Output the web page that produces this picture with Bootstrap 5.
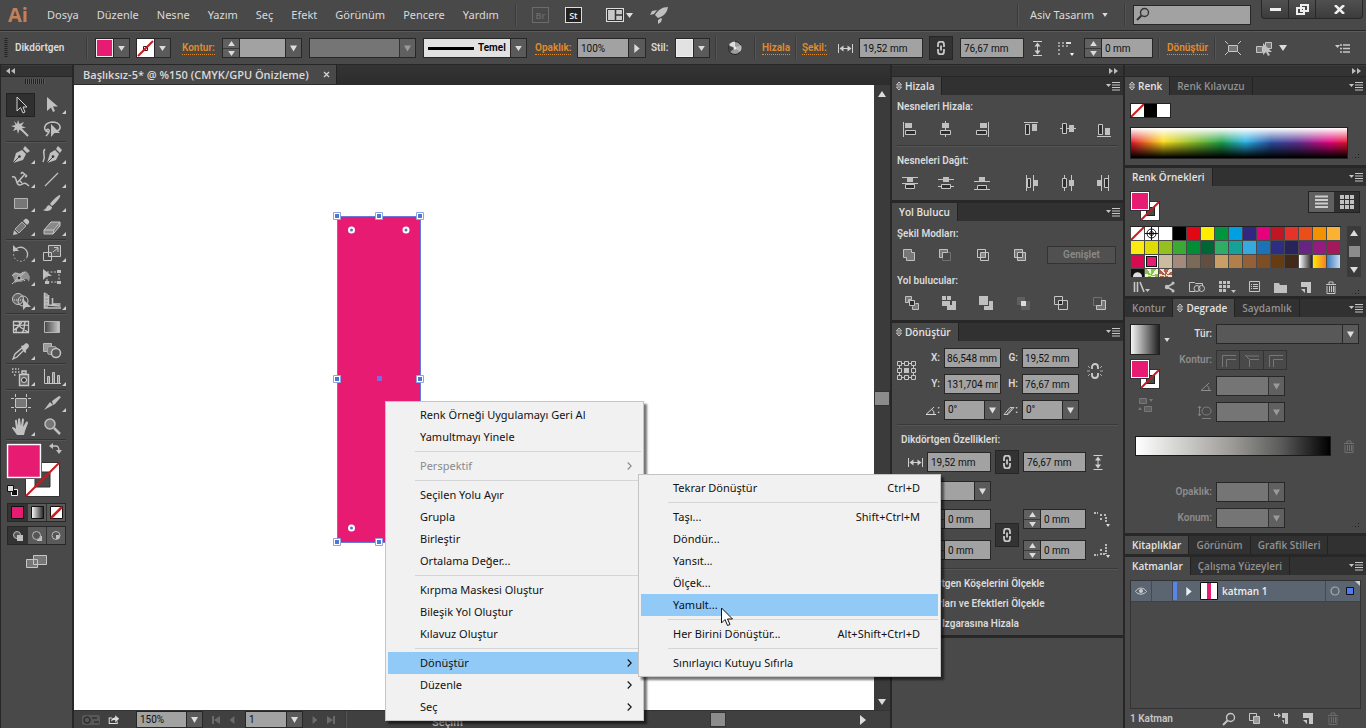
<!DOCTYPE html>
<html lang="tr">
<head>
<meta charset="utf-8">
<meta name="viewport" content="width=device-width, initial-scale=1">
<title>Başlıksız-5* @ %150</title>
<link href="https://cdn.jsdelivr.net/npm/bootstrap@5.3.0/dist/css/bootstrap.min.css" rel="stylesheet">
<style>
:root{--bg:#494949;--line:#272727;--ink:#dadada;--field:#a2a2a2;--pink:#e81b73;--orange:#e08c2e}
body{background:var(--bg);color:var(--ink);font:600 10px/14px Roboto,"Open Sans",sans-serif;min-height:100vh;display:flex;flex-direction:column;position:relative;overflow-x:hidden}
button{background:none;border:0;padding:0;color:inherit;font:inherit;display:flex;align-items:center;justify-content:center}
a{color:inherit;text-decoration:none}
svg{display:block;flex:none}
input,select{font:400 10px/14px Roboto,"DejaVu Sans",sans-serif;color:#111;background:var(--field);border:1px solid var(--line);border-radius:0;height:20px;padding:0 3px;min-width:0;width:100%}
select{appearance:none;background:var(--field) url("data:image/svg+xml,%3Csvg xmlns='http://www.w3.org/2000/svg' width='16' height='18'%3E%3Crect width='16' height='18' fill='%235a5a5a'/%3E%3Crect width='1' height='18' fill='%23272727'/%3E%3Cpath d='M5 6.500h7l-3.500 6z' fill='%23dedede'/%3E%3C/svg%3E") right center no-repeat}
select:disabled{opacity:1;color:#333;background-color:#757575;background-image:url("data:image/svg+xml,%3Csvg xmlns='http://www.w3.org/2000/svg' width='16' height='18'%3E%3Crect width='16' height='18' fill='%23606060'/%3E%3Crect width='1' height='18' fill='%23333333'/%3E%3Cpath d='M5 6.500h7l-3.500 6z' fill='%239a9a9a'/%3E%3C/svg%3E")}
.f{fill:#c0c0c0}
.ln{fill:none;stroke:#c6c6c6}
.hol{fill:#2e2e2e;stroke:#c6c6c6}
/* title bar */
.menubar{height:31px;border-bottom:1px solid var(--line);font:400 11px/16px "Noto Sans","Open Sans",sans-serif;padding-left:8px}
.logo{font:700 20px/26px "Open Sans",sans-serif;color:#bf8259;width:39px}
.menus{gap:18px}
.vsep{width:1px;height:22px;background:#3a3a3a;box-shadow:1px 0 #555}
.sq{width:17px;height:16px;border:1px solid #6b6b6b;color:#6b6b6b;font:600 9px/13px "Open Sans",sans-serif}
.sq.on{border-color:#ddd;color:#eee;background:#222}
.find{position:relative;width:118px}
.find svg{position:absolute;left:3px;top:2px;color:#333}
.winbtns{align-self:start;border:1px solid var(--line);border-top:0;border-radius:0 0 4px 4px;background:linear-gradient(#505050,#3c3c3c);margin-left:10px;margin-right:3px}
.winbtns button{height:18px;width:27px;border-right:1px solid var(--line)}
.winbtns button:last-child{width:46px;border:0}
/* control bar */
.control{height:34px;border-bottom:1px solid var(--line);border-top:1px solid #5a5a5a;display:grid;align-items:center;
grid-template-columns:15px 71px 9px 41px 46px 40px 87px 114px 112px 42px 74px 24px 40px 13px 26px 8px 33px 7px 36px 21px 70px 31px 73px 24px 27px 74px 9px 47px 11px 31px 23px 1fr 31px}
.olink{color:var(--orange);border-bottom:1px dotted var(--orange);line-height:13px;justify-self:start}
.spin{display:flex}
.spin>span{display:flex;flex-direction:column;width:17px;flex:none;background:#606060;border:1px solid var(--line);border-right:0}
.spin button{height:9px}
.spin button+button{border-top:1px solid #3a3a3a}
.chip{display:flex;border:1px solid var(--line);height:20px;width:35px}
.chip .sw{width:18px;height:18px;border:1px solid #eee}
.swlight{background:#e2e2e2}
.chip .dd{width:16px;height:18px;background:#5a5a5a;border-left:1px solid var(--line);display:flex;align-items:center;justify-content:center}
.bgpink{background:var(--pink)}
.flyout{width:17px;height:20px;background:#5a5a5a;border:1px solid var(--line);border-left:0;flex:none}
.chain{width:24px;height:24px;background:#333;border:1px solid #262626}
.w58{width:58px}.w64{width:64px}.w67{width:67px}.w69{width:69px}.w80{width:80px}.w107{width:107px}.w104{width:104px}
/* tool column */
.tools{width:74px;flex:none;border-right:2px solid var(--line);border-left:1px solid var(--line)}
.strip{height:12px;background:#333;border-bottom:1px solid var(--line);border-top:1px solid #3c3c3c;padding:0 5px;display:flex;align-items:center;flex:none;color:#bbb}
.grip{height:5px;width:20px;background:repeating-linear-gradient(90deg,#222 0 1px,#5a5a5a 1px 2px);margin:2px 0 9px 24px}
.toolgrid{display:grid;grid-template-columns:31px 31px;grid-auto-rows:minmax(1px,auto);padding-left:5px}
.toolgrid button{position:relative;height:24px;width:29px}
.toolgrid .sub::after{content:"";position:absolute;right:0;bottom:3px;border:2px solid;border-color:transparent #ccc #ccc transparent}
.toolgrid .sel{background:#303030;border:1px solid #222}
.tline{grid-column:1/3;height:1px;background:#343434;border:0;box-shadow:0 1px #555;width:60px;margin:0 0 1px;opacity:1}
.fillbox{align-self:start;margin:2px 0 0 5px}
.modes{width:59px;height:19px;border:1px solid #272727;background:#5a5a5a;display:grid;grid-template-columns:1fr 1fr 1fr;margin-left:6px}
.modes button+button{border-left:1px solid #333}
.modes .act{background:#333}
/* document */
.doc{min-width:0}
.doctabs{height:20px;background:linear-gradient(#343434,#2c2c2c)}
.doctab{background:var(--bg);height:19px;padding:0 6px 0 9px;width:263px;border-right:1px solid #222;font:600 11px/14px "Open Sans",sans-serif}
.sheet{background:#fff;position:relative}
.art{position:absolute;left:258px;top:126px}
.vscroll{width:16px;background:#3b3b3b;padding:6px 0 5px}
.thumb{width:16px;height:15px;background:#8c8c8c;border:1px solid #333}
.status{height:18px;background:#404040;border-top:1px solid #333;overflow:hidden;flex:none;color:#6b6b6b}
.status select{height:17px}
.nav1{gap:9px;padding:0 10px 0 9px}
.seltext{margin-left:86px;color:#bbb;align-self:end;font-size:11px;line-height:11px}
.hth{margin-right:134px}
/* panels */
.pcol1{width:235px;flex:none;border-left:2px solid var(--line);border-right:2px solid var(--line)}
.pcol2{width:241px;flex:none}
.tabs{height:18px;background:#313131;display:flex;flex:none}
.tabs button{padding:0 7px;height:18px;color:#929292;border-right:1px solid #222;gap:3px;font:600 10px/14px "Open Sans",sans-serif;white-space:nowrap}
.tabs button.act{background:var(--bg);color:#e4e4e4}
.tabs .lead-ud{padding-left:4px}
.tabs button.more{margin-left:auto;border:0;padding:0 3px}
.pane{border-bottom:3px solid var(--line);padding:0 5px}
.rule{height:1px;background:#393939;box-shadow:0 1px #555}
.align{padding-top:5px;padding-bottom:1px}
.ico6{display:grid;grid-template-columns:36px 36px 50px 36px 36px 16px;padding-left:5px;margin:7px 0 8px}
.pf{padding-top:6px;padding-bottom:9px}
.pf1{display:grid;grid-template-columns:36px 38px 37px 34px 69px;align-items:center;padding-left:5px;margin:5px 0 10px}
.pf2{display:grid;grid-template-columns:37px 37px 37px 38px 38px 16px;padding-left:8px;margin-top:8px}
.expand{border:1px solid #333;color:#8a8a8a;height:18px;background:#505050}
.tr{padding-top:7px;padding-bottom:1px}
.xy{display:grid;grid-template-columns:28px 19px 57px 21px 57px 1fr;row-gap:6px;align-items:center}
.xy input{padding:0 2px}
.refp,.brk{grid-row:span 2}
.props{margin:8px 0 3px 4px}
.rp{display:grid;grid-template-columns:30px 64px 4px 24px 4px 63px 1fr;align-items:center}
.rgap{margin-top:7px}
.rows2{row-gap:11px;margin-top:8px}
.both{grid-row:span 2}
.lab{text-align:right;padding-right:4px}
.dim{color:#8d8d8d}
.ticks{padding-top:5px}
.tick{display:flex;align-items:center;gap:4px;height:20px;white-space:nowrap}
.tick input{width:11px;height:11px;flex:none;appearance:none;background:#333;padding:0}
.colorpane{padding-top:8px;padding-bottom:6px}
.spectrum{height:32px;width:218px;border:1px solid #222;background:linear-gradient(#fff,#fff0 50%),linear-gradient(#0000 45%,#000 98%),linear-gradient(90deg,#e5132b,#fbdc1a 15%,#6fb52c 32%,#1ba04b 42%,#27b1e6 53%,#2a4fa2 65%,#5d3192 77%,#e5007e 92%,#e5132b)}
.specrow{margin-top:9px}
.swpane{padding-top:5px}
.swwrap{gap:6px;margin-top:4px}
.swgrid{display:grid;grid-template-columns:repeat(15,14px);grid-auto-rows:14px;border-top:1px solid #222;height:51px;overflow:hidden;flex:none;width:211px;padding-left:1px}
.swgrid button,.swgrid svg{width:13px;height:13px}
.picked{box-shadow:inset 0 0 0 1px #fff,inset 0 0 0 2px #111}
.sbar{width:14px;height:51px;background:#3a3a3a;padding:4px 0}
.view{width:52px;height:22px;border:1px solid #222;background:#303030;margin-right:1px}
.view button{flex:1}
.view button:first-child{background:#606060}
.corner-grip{width:10px;height:9px;background:radial-gradient(#1c1c1c 1px,transparent 1px) 0 0/3px 3px;clip-path:polygon(100% 0,100% 100%,0 100%)}
.foot{color:#c6c6c6}
.swfoot{gap:13px;padding:2px 0 1px 3px;height:19px}
.gpane{padding-top:7px;padding-bottom:5px}
.gleft{width:43px}
.gform{display:grid;grid-template-columns:43px 1fr;row-gap:6px;align-items:center;flex:1}
.second{padding-left:43px}
.wide{width:143px;background-color:#585858}
.rampr{margin:14px 0 26px 5px}
.ramp{width:196px;height:20px;border:1px solid #1a1a1a;background:linear-gradient(90deg,#fff,#9b9a96 50%,#5a5a5a 75%,#000)}
.gprev{width:30px;height:31px;border:1px solid #222;background:linear-gradient(90deg,#f4f4f4,#222)}
.strk{border:1px solid #333;height:20px;width:71px}
.strk button{flex:1}
.strk button+button{border-left:1px solid #333}
.gapline{height:3px;background:var(--line)}
.lpane{padding:5px 5px 0}
.layers{border:1px solid #333}
.lrow{background:#5b6471;height:21px;border-bottom:1px solid #3c424c;font:600 10px/14px "Open Sans",sans-serif;color:#eee}
.lrow>*{height:20px;display:flex;align-items:center;justify-content:center}
.lcell{width:21px;border-right:1px solid #434a55}
.target{border-left:1px solid #434a55}
.lfoot{height:19px;gap:13px}
.lfoot svg:last-child{margin-right:22px}
/* context menus */
.cmenu{position:absolute;background:#f1f1f1;border:1px solid #c4c4c4;border-radius:0;padding:2px;margin:0;box-shadow:3px 3px 2px #0008;z-index:5;min-width:0;display:block}
.cmenu .dropdown-item{padding:0 18px 0 32px;height:22px;display:flex;align-items:center;justify-content:space-between;color:#111;font:400 11px/22px "Noto Sans","Open Sans",sans-serif;white-space:nowrap}
.cmenu .hot{background:#91c9f7}
.cmenu .off{color:#8a8a8a}
.cmenu .dropdown-divider{margin:3px 0 3px 27px;border-top:1px solid #d5d5d5;opacity:1}
.m1{left:385px;top:401px;width:259px}
.m1 .dropdown-item{padding-right:9px}
.m2{left:638px;top:474px;width:303px}
.ptr{position:absolute;left:720px;top:607px;z-index:9}
</style>
</head>
<body>
<svg width="0" height="0" class="position-absolute">
<defs>
<symbol id="dn" viewBox="0 0 8 6"><path d="M0 0h8l-4 6z" fill="#dcdcdc"/></symbol>
<symbol id="up" viewBox="0 0 8 6"><path d="M0 6h8l-4-6z" fill="#dcdcdc"/></symbol>
<symbol id="lt" viewBox="0 0 6 10"><path d="M6 0v10l-6-5z" fill="currentColor"/></symbol>
<symbol id="rt" viewBox="0 0 6 10"><path d="M0 0v10l6-5z" fill="currentColor"/></symbol>
<symbol id="chev" viewBox="0 0 5 8"><path d="M.7.5L4.200 4 .7 7.500" fill="none" stroke="currentColor" stroke-width="1.100"/></symbol>
<symbol id="more" viewBox="0 0 14 9"><path d="M0 2h5l-2.500 3z" fill="#c6c6c6"/><path d="M6 .5h8M6 3h8M6 5.500h8M6 8h8" stroke="#c6c6c6"/></symbol>
<symbol id="ud" viewBox="0 0 6 10"><path d="M.5 4L3 1l2.500 3zM.5 6L3 9l2.500-3z" fill="none" stroke="#cfcfcf"/></symbol>
<symbol id="chain" viewBox="0 0 10 14"><path d="M2 6V3.500a2.500 2.500 0 0 1 6 0V6M2 8v2.500a2.500 2.500 0 0 0 6 0V8M5 4.500v5" fill="none" stroke="#c9c9c9" stroke-width="1.800"/></symbol>
<symbol id="wid" viewBox="0 0 15 9"><path d="M.5 0v9M14.500 0v9M3 4.500h9" stroke="#d0d0d0"/><path d="M1.500 4.500l4-3v6zM13.500 4.500l-4-3v6z" fill="#d0d0d0"/></symbol>
<symbol id="hei" viewBox="0 0 9 15"><path d="M0 .5h9M0 14.500h9M4.500 3v9" stroke="#d0d0d0"/><path d="M4.500 1.500l-3 4h6zM4.500 13.500l-3-4h6z" fill="#d0d0d0"/></symbol>
<symbol id="trash" viewBox="0 0 12 13"><path d="M1 3.500h10M4 3V1h4v2M2 5v7.500h8V5M4.500 5v6M6.500 5v6M8.500 5v6" fill="none" stroke="currentColor"/></symbol>
<symbol id="page" viewBox="0 0 12 11"><path d="M1 0h10v11H7V5H1z" fill="#c6c6c6"/><path d="M1 7h4v4z" fill="#c6c6c6"/></symbol>
<symbol id="fs" viewBox="0 0 31 31"><rect x="10.500" y="10.500" width="19" height="19" fill="#fff" stroke="#333"/><rect x="16.500" y="16.500" width="8" height="8" fill="#494949" stroke="#222"/><path d="M11 29L29 11" stroke="#c9191e" stroke-width="2"/><rect x=".5" y=".5" width="19" height="19" fill="#e81b73" stroke="#333"/><rect x="1.500" y="1.500" width="17" height="17" fill="#e81b73" stroke="#fff"/></symbol>
<symbol id="none" viewBox="0 0 13 13"><path d="M0 0h13v13H0z" fill="#fff"/><path d="M0 13L13 0" stroke="#d31b1b" stroke-width="2"/></symbol>
<symbol id="lens" viewBox="0 0 14 14"><circle cx="8.500" cy="5.500" r="4" fill="none" stroke="currentColor" stroke-width="1.400"/><path d="M5.500 8.500L1 13" stroke="currentColor" stroke-width="2"/></symbol>
<symbol id="ang" viewBox="0 0 12 9"><path d="M11 8.500H1L9 1M7 3.500a5 5 0 0 1 2 5" fill="none" stroke="currentColor"/></symbol>
</defs>
</svg>

<header class="menubar d-flex align-items-center">
<span class="logo">Ai</span>
<nav class="menus d-flex"><a href="#">Dosya</a><a href="#">Düzenle</a><a href="#">Nesne</a><a href="#">Yazım</a><a href="#">Seç</a><a href="#">Efekt</a><a href="#">Görünüm</a><a href="#">Pencere</a><a href="#">Yardım</a></nav>
<i class="vsep ms-3"></i>
<button class="sq ms-3">Br</button><button class="sq on ms-3 me-2">St</button>
<button class="ms-3" aria-label="Belgeleri düzenle"><svg width="27" height="16"><rect x=".5" y="1.500" width="17" height="13" fill="#c8c8c8" stroke="#ddd"/><path d="M9.500 2v12M10 8h7" stroke="#333" stroke-width="1.500"/><path d="M1.500 2.500h15v11h-15z" fill="none" stroke="#333"/><path d="M20 6h7l-3.500 5z" fill="#ddd"/></svg></button>
<button class="ms-3" aria-label="GPU"><svg width="20" height="20" viewBox="0 0 20 20"><path class="f" d="M19 2C13 2 9 5 6 10l3 3c6-2 9-5 10-11zM8 5L3 6 1 10l4-1zM12 13l1 1-1 3-3 2 0-4z"/></svg></button>
<i class="vsep ms-auto"></i>
<button class="mx-2 ps-1">Asiv Tasarım<svg class="ms-2" width="6" height="4"><use href="#dn"/></svg></button>
<i class="vsep mx-2"></i>
<label class="find"><svg width="14" height="14"><use href="#lens"/></svg><input aria-label="Ara"></label>
<div class="winbtns d-flex"><button aria-label="Küçült"><svg width="11" height="3"><path d="M0 0h11v3H0z" fill="#eee"/></svg></button><button aria-label="Geri yükle"><svg width="13" height="11"><path d="M5 1h7v6H5zM1 4h7v6H1z" fill="#444" stroke="#eee" stroke-width="2"/></svg></button><button aria-label="Kapat"><svg width="11" height="9"><path d="M1 0l9 9M10 0L1 9" stroke="#eee" stroke-width="2.500"/></svg></button></div>
</header>

<div class="control">
<svg class="ms-1" width="4" height="20"><path d="M2 0v20" stroke="#222" stroke-width="3" stroke-dasharray="1 1"/></svg>
<span>Dikdörtgen</span><i class="vsep"></i>
<button class="chip" aria-label="Dolgu"><span class="sw bgpink"></span><span class="dd"><svg width="7" height="5"><use href="#dn"/></svg></span></button>
<button class="chip" aria-label="Kontur rengi"><svg width="17" height="18" viewBox="0 0 17 18"><path d="M0 0h17v18H0z" fill="#fff"/><path d="M6.500 7.500h4v4h-4z" fill="none" stroke="#222"/><path d="M1 17L16 2" stroke="#c9191e" stroke-width="2"/></svg><span class="dd"><svg width="7" height="5"><use href="#dn"/></svg></span></button>
<a class="olink" href="#">Kontur:</a>
<div class="spin w80"><span><button aria-label="Artır"><svg width="7" height="5"><use href="#up"/></svg></button><button aria-label="Azalt"><svg width="7" height="5"><use href="#dn"/></svg></button></span><select aria-label="Kontur kalınlığı"><option></option></select></div>
<div class="w107"><select disabled aria-label="Genişlik profili"><option></option></select></div>
<button class="chip w104"><span class="d-flex flex-fill h-100 swlight align-items-center text-black ps-1"><svg width="46" height="3"><path d="M0 1.500h46" stroke="#000" stroke-width="3"/></svg><span class="ms-1">Temel</span></span><span class="dd"><svg width="7" height="5"><use href="#dn"/></svg></span></button>
<a class="olink" href="#">Opaklık:</a>
<div class="d-flex w69"><input aria-label="Opaklık" value="100%"><button class="flyout" aria-label="Opaklık kaydırıcısı"><svg width="6" height="9"><use href="#rt"/></svg></button></div>
<span>Stil:</span>
<button class="chip" aria-label="Grafik stili"><span class="sw swlight"></span><span class="dd"><svg width="7" height="5"><use href="#dn"/></svg></span></button>
<i class="vsep"></i>
<button class="justify-content-start" aria-label="Renklendir"><svg width="14" height="14" viewBox="0 0 14 14"><circle cx="7" cy="7" r="6.500" fill="#9d9d9d" stroke="#222"/><path d="M7 7L1 4A6.500 6.500 0 0 1 7 .500z" fill="#ddd"/><path d="M7 7l6-3a6.500 6.500 0 0 1-1 7z" fill="#bbb"/><path d="M7 7l-5 4a6.500 6.500 0 0 1-1-6z" fill="#444"/><circle cx="7" cy="7" r="1.500" fill="#eee"/></svg></button>
<i class="vsep"></i><a class="olink" href="#">Hizala</a><i class="vsep"></i>
<a class="olink" href="#">Şekil:</a>
<svg width="15" height="9"><use href="#wid"/></svg>
<div class="w64"><input aria-label="Genişlik" value="19,52 mm"></div>
<button class="chain" aria-label="Oranı koru"><svg width="10" height="14"><use href="#chain"/></svg></button>
<div class="w64"><input aria-label="Yükseklik" value="76,67 mm"></div>
<svg width="9" height="15"><use href="#hei"/></svg>
<svg width="18" height="15"><path d="M1 4h2v2H1zM1 8h2v2H1zM1 12h2v2H1zM1 1h2v2H1zM5 1h2v2H5zM5 4h2v2H5zM9 4h2v2H9z" fill="#9a9a9a"/><path d="M9 1h5v2H9z" fill="#ddd"/><path d="M13 12h4l-2 3z" fill="#fff"/></svg>
<div class="spin w69"><span><button aria-label="Artır"><svg width="7" height="5"><use href="#up"/></svg></button><button aria-label="Azalt"><svg width="7" height="5"><use href="#dn"/></svg></button></span><input aria-label="Köşe yarıçapı" value="0 mm"></div>
<i class="vsep"></i><a class="olink" href="#">Dönüştür</a><i class="vsep"></i>
<button class="justify-content-start" aria-label="Yalıt"><svg width="16" height="14" viewBox="0 0 16 14"><path d="M3.500 4.500h9v6h-9z" fill="#777" stroke="#c6c6c6"/><path class="ln" d="M0 0l3 3M16 0l-3 3M0 14l3-3M16 14l-3-3"/></svg></button>
<button class="justify-content-start" aria-label="Benzerini seç"><svg width="16" height="15" viewBox="0 0 16 15"><path d="M.5 5.500h6v6h-6zM9.500 1.500h6v6h-6z" fill="#777" stroke="#c6c6c6"/><path class="f" d="M7 2v12l3-3 2 4 2-1-2-3h4z"/></svg></button>
<svg width="8" height="6"><use href="#dn"/></svg>
<button class="justify-content-start" aria-label="Panel menüsü"><svg width="15" height="9"><path d="M0 1h5l-2.500 3z" fill="#ccc"/><path d="M5 1h2M8 1h7M5 4.500h2M8 4.500h7M5 8h2M8 8h7" stroke="#c6c6c6" stroke-width="1.400"/></svg></button>
</div>

<main class="d-flex flex-fill">
<aside class="tools d-flex flex-column">
<div class="strip"><svg width="9" height="6" viewBox="0 0 9 6"><path d="M4 0v6L0 3zM9 0v6L5 3z" fill="currentColor"/></svg></div>
<div class="grip"></div>
<div class="toolgrid">
<button class="sel" aria-label="Seçim"><svg width="20" height="20" viewBox="0 0 20 20"><path d="M6 2v14l3.500-3.500L12 18l2-1-2-5h4z" fill="#2a2a2a" stroke="#d0d0d0"/></svg></button>
<button class="sub" aria-label="Doğrudan seçim"><svg width="20" height="20" viewBox="0 0 20 20"><path class="f" d="M5 2v14l4-3.500 2 4.500 2-1-2-4.500h5z"/></svg></button>
<button aria-label="Sihirli değnek"><svg width="20" height="20" viewBox="0 0 20 20"><path d="M8 8l9 9" stroke="#c0c0c0" stroke-width="2"/><path class="f" d="M7 1l1.500 4L13 3l-2.500 4L15 8.500l-4.500 1L12 13 8.500 10.500 7 15l-1-4.500L2 12l2-3.500L0 7l4.500-1L3 2l3 3z"/></svg></button>
<button aria-label="Kement"><svg width="20" height="20" viewBox="0 0 20 20"><path d="M6 13c-5-1-5-9 4-10 9 0 10 7 5 9M6 13c-3-2 0-4 1-2s-1 4-3 6" fill="none" stroke="#c0c0c0" stroke-width="1.500"/><path class="f" d="M9 5v13l3.500-4H18z"/></svg></button>
<hr class="tline">
<button class="sub" aria-label="Kalem"><svg width="20" height="20" viewBox="0 0 20 20"><path class="f" d="M2 18l3-10 6-3 4 4-3 6zM12 4l2-3 5 5-3 2z"/><path d="M2 18l6-6" stroke="#444"/><circle cx="8.500" cy="11.500" r="1.300" fill="#333"/></svg></button>
<button class="sub" aria-label="Eğrilik"><svg width="20" height="20" viewBox="0 0 20 20"><path class="f" d="M5 18l3-10 5-3 4 4-3 6zM14 4l2-3 4 4-2 3z"/><path d="M1 17C5 10-1 8 3 4" fill="none" stroke="#c0c0c0" stroke-width="1.500"/><path d="M5 18l6-6" stroke="#444"/><circle cx="11" cy="11.500" r="1.300" fill="#333"/></svg></button>
<button class="sub" aria-label="Yol üzerinde yazı"><svg width="20" height="20" viewBox="0 0 20 20"><path d="M1 8c6-2 3 9 8 8 4-1 4-4 9 1M6 14l8-9M8 11l3 3M11 3l5 4M11 3l-1 2M16 7l-2 1" fill="none" stroke="#c0c0c0" stroke-width="1.500"/></svg></button>
<button class="sub" aria-label="Çizgi"><svg width="20" height="20"><path d="M3 17L16 4" stroke="#c0c0c0" stroke-width="1.300"/></svg></button>
<button class="sub" aria-label="Dikdörtgen"><svg width="20" height="20"><path d="M3.500 5.500h13v10h-13z" fill="#777" stroke="#b5b5b5"/></svg></button>
<button class="sub" aria-label="Fırça"><svg width="20" height="20" viewBox="0 0 20 20"><path class="f" d="M18 2c2 1-6 10-8 11l-2-2C9 9 16 2 18 2zM7 12l3 2c0 4-6 5-9 3 4-1 3-4 6-5z"/></svg></button>
<button class="sub" aria-label="Kurşun kalem"><svg width="20" height="20" viewBox="0 0 20 20"><path class="f" d="M2 18l1-5 4 4zM12 4l2-2c2-1 5 2 4 4l-2 2z"/><path d="M4 12l7-7 4 4-7 7z" fill="#777" stroke="#b0b0b0"/></svg></button>
<button class="sub" aria-label="Silgi"><svg width="20" height="20" viewBox="0 0 20 20"><path d="M2 13l7-8h9l-6 8zM2 13v4h9l1-4M11 17l7-8V5" fill="#888" stroke="#c6c6c6"/></svg></button>
<hr class="tline">
<button class="sub" aria-label="Döndür"><svg width="20" height="20" viewBox="0 0 20 20"><path d="M4 7a7 7 0 0 1 12 7" fill="none" stroke="#c0c0c0" stroke-width="1.300"/><path d="M16 14a7 7 0 1 1-12-7" fill="none" stroke="#c0c0c0" stroke-dasharray="1.500 2"/><path class="f" d="M2 2v6h6z"/></svg></button>
<button class="sub" aria-label="Ölçek"><svg width="20" height="20" viewBox="0 0 20 20"><path d="M6.500 2.500h12v11h-12z" fill="#5c5c5c" stroke="#c6c6c6"/><path class="ln" d="M1.500 9.500h8v8h-8zM11 9l5-4M12 4.500h4V9"/></svg></button>
<button class="sub" aria-label="Genişlik"><svg width="20" height="20" viewBox="0 0 20 20"><path class="f" d="M1 8c4-6 6 0 9-2s6-4 9 4l-1 5c-3-7-6 0-8 0s-5-1-6 2c0-3-1-5-3-9z" opacity=".6"/><path class="ln" d="M1 17L14 5M1 9c5-6 7 2 11-4M14 14c-4-5-6 3-10-1"/><circle class="hol" cx="8" cy="11" r="2"/></svg></button>
<button aria-label="Serbest dönüştürme"><svg width="20" height="20" viewBox="0 0 20 20"><path d="M5 5h12v10H5z" fill="none" stroke="#c6c6c6" stroke-dasharray="2 1.500"/><path class="f" d="M1 2v11l4-4h5zM15 3h4v3h-4zM15 14h4v3h-4zM3 14h4v3H3z"/></svg></button>
<button class="sub" aria-label="Şekil oluşturucu"><svg width="20" height="20" viewBox="0 0 20 20"><circle cx="7" cy="8" r="5.500" fill="#666" stroke="#c6c6c6"/><circle class="ln" cx="12" cy="10" r="5"/><path d="M3 9h10" stroke="#ddd" stroke-dasharray="1 1"/><path class="f" d="M12 8v11l3-3h5z"/></svg></button>
<button class="sub" aria-label="Perspektif ızgarası"><svg width="20" height="20" viewBox="0 0 20 20"><path class="f" d="M2 1l4 2v14H2z" opacity=".7"/><path d="M2.500 2v15H19M6.500 4v10l12 1M10.500 7v6h8M2 6l5 1M2 10h5M2 13h5" fill="none" stroke="#c0c0c0" stroke-width="1.600"/></svg></button>
<hr class="tline">
<button aria-label="Kafes"><svg width="20" height="20" viewBox="0 0 20 20"><path d="M2.500 4.500h15v11h-15zM2 8c6 1 8 0 9-4M2 14c4-4 10-8 16-5M5 15C4 9 12 8 7 4M11 16c5-6 0-8 4-12M9 10l8 5" fill="none" stroke="#c6c6c6" stroke-width="1.300"/></svg></button>
<button aria-label="Degrade"><svg width="20" height="20"><defs><linearGradient id="gt"><stop stop-color="#444"/><stop offset="1" stop-color="#ccc"/></linearGradient></defs><path d="M2.500 4.500h15v11h-15z" fill="url(#gt)" stroke="#b5b5b5"/></svg></button>
<button class="sub" aria-label="Damlalık"><svg width="20" height="20" viewBox="0 0 20 20"><path d="M2 18l2-5 7-6 2 2-7 7z" fill="none" stroke="#c6c6c6" stroke-width="1.300"/><path class="f" d="M10 5l3-1c2-4 7 0 4 3l-2 2v3l-2-1z"/></svg></button>
<button aria-label="Karıştırma"><svg width="20" height="20" viewBox="0 0 20 20"><path d="M1.500 2.500h8v8h-8z" fill="#999" stroke="#bbb"/><rect x="5.500" y="5.500" width="9" height="8" rx="2" fill="#777" stroke="#aaa"/><circle cx="14" cy="12" r="4.500" fill="#555" stroke="#c6c6c6" stroke-width="1.500"/></svg></button>
<hr class="tline">
<button class="sub" aria-label="Sembol püskürtücü"><svg width="20" height="20" viewBox="0 0 20 20"><path d="M8.500 7.500h9v11h-9zM11 4h4v3h-4z" fill="#666" stroke="#c6c6c6" stroke-width="1.400"/><circle cx="13" cy="13" r="2.500" fill="#333" stroke="#ddd"/><path d="M1 2h7M1 5h8M3 8h3" stroke="#c6c6c6" stroke-width="1.500" stroke-dasharray="1.500 1.500"/></svg></button>
<button class="sub" aria-label="Grafik"><svg width="20" height="20" viewBox="0 0 20 20"><path class="ln" d="M2.500 2v14.500H19"/><path d="M5.500 16V9.500h2V16M10.500 16V5.500h2V16M15.500 16V8.500h2V16" fill="#888" stroke="#c6c6c6"/></svg></button>
<hr class="tline">
<button aria-label="Çalışma yüzeyi"><svg width="20" height="20" viewBox="0 0 20 20"><path d="M4.500 5.500h11v9h-11z" fill="#777"/><path class="ln" d="M0 5.500h3M5 5.500h10M17 5.500h3M0 14.500h3M5 14.500h10M17 14.500h3M4.500 1v3M4.500 5.500v9M4.500 16v3M15.500 1v3M15.500 5.500v9M15.500 16v3"/></svg></button>
<button class="sub" aria-label="Dilim"><svg width="20" height="20" viewBox="0 0 20 20"><path class="f" d="M2 17l6-8 3 3zM10 8l7-5 2 1-6 7-2 1z"/></svg></button>
<button class="sub" aria-label="El"><svg width="20" height="20" viewBox="0 0 20 20"><path class="f" d="M6 18l-5-7c0-2 2-1 4 1L4 4c0-1 2-2 2 0l1 5V2c1-1 2-1 2 0l1 7 1-7c1-1 2 0 2 1l-1 7 3-5c1-1 2 0 2 1l-3 8-1 4z"/></svg></button>
<button aria-label="Yakınlaştırma"><svg width="20" height="20" viewBox="0 0 20 20"><circle cx="8" cy="7" r="5" fill="#777" stroke="#c0c0c0" stroke-width="1.500"/><path d="M12 11l6 6" stroke="#c0c0c0" stroke-width="2.500"/></svg></button>
<hr class="tline">
</div>
<button class="fillbox" aria-label="Dolgu ve kontur"><svg width="62" height="56" viewBox="0 0 62 56"><path d="M19.500 19.500h34v34h-34z" fill="#fff" stroke="#333"/><path d="M29 29h15v15H29z" fill="#494949" stroke="#333"/><path d="M20 53L53 20" stroke="#c9191e" stroke-width="2"/><path d="M.5.5h35v35h-35z" fill="#e81b73" stroke="#333"/><path d="M1.500 1.500h33v33h-33z" fill="#e81b73" stroke="#fff" stroke-width="1.500"/><path d="M47 3h3c2 0 3 1 3 5" fill="none" stroke="#c6c6c6" stroke-width="1.300"/><path class="f" d="M43 3l4-3v6zM50 7h6l-3 4z"/><path d="M5.500 46.500h6v6h-6z" fill="#111" stroke="#eee"/><path d="M1.500 42.500h6v6h-6z" fill="#ddd" stroke="#111"/></svg></button>
<div class="modes mt-1"><button class="act" aria-label="Renk"><svg width="13" height="13"><path d="M.5.5h12v12H.5z" fill="#e81b73" stroke="#111"/></svg></button><button aria-label="Degrade"><svg width="13" height="13"><defs><linearGradient id="gm"><stop stop-color="#fff"/><stop offset="1" stop-color="#222"/></linearGradient></defs><path d="M.5.5h12v12H.5z" fill="url(#gm)" stroke="#111"/></svg></button><button aria-label="Yok"><svg width="13" height="13"><path d="M.5.5h12v12H.5z" fill="#fff" stroke="#111"/><path d="M1 12L12 1" stroke="#d31b1b" stroke-width="2.500"/></svg></button></div>
<div class="modes mt-1"><button class="act" aria-label="Normal çiz"><svg width="12" height="12"><circle cx="5" cy="5" r="3.500" fill="#555" stroke="#bbb"/><path class="f" d="M5 5h6v6H5z"/></svg></button><button aria-label="Arkaya çiz"><svg width="12" height="12"><path class="f" d="M6 6h5v5H6z"/><circle cx="5.500" cy="5.500" r="4" fill="#555" stroke="#bbb"/></svg></button><button aria-label="İçeriye çiz"><svg width="12" height="12"><circle cx="6" cy="5.500" r="4" fill="#555" stroke="#bbb"/><path class="f" d="M6 5h4l-1 4H6z"/></svg></button></div>
<button class="mt-2" aria-label="Ekran modu"><svg width="22" height="18"><path d="M7.500 2.500h13v9h-13zM.500 6.500h11v8H.5z" fill="#777" stroke="#c6c6c6"/></svg></button>
</aside>

<section class="doc d-flex flex-column flex-fill">
<div class="doctabs"><div class="doctab d-flex align-items-center justify-content-between"><span>Başlıksız-5* @ %150 (CMYK/GPU Önizleme)</span><button aria-label="Sekmeyi kapat"><svg width="7" height="7"><path d="M1 1l5 5M6 1L1 6" stroke="#d4d4d4" stroke-width="1.300"/></svg></button></div></div>
<div class="d-flex flex-fill">
<div class="sheet flex-fill">
<svg class="art" width="96" height="336" viewBox="0 0 96 336">
<path d="M5.500 5.500h83v326h-83z" fill="#e81b73" stroke="#6a78d8"/>
<g fill="#fff" stroke="#8fa3e0"><path d="M1.500 1.500h7v7h-7zM43.500 1.500h7v7h-7zM84.500 1.500h7v7h-7zM1.500 164.500h7v7h-7zM84.500 164.500h7v7h-7zM1.500 327.500h7v7h-7zM43.500 327.500h7v7h-7z"/></g>
<g fill="#4c78d2"><path d="M3 3h4v4H3zM45 3h4v4h-4zM86 3h4v4h-4zM3 166h4v4H3zM86 166h4v4h-4zM3 329h4v4H3zM45 329h4v4h-4z"/><path d="M45 165h5v5h-5z" fill="#7d6be0"/></g>
<g fill="#4c78d2" stroke="#fff" stroke-width="2"><circle cx="19.500" cy="19" r="2.500"/><circle cx="74" cy="19" r="2.500"/><circle cx="19.500" cy="317" r="2.500"/></g>
</svg>
</div>
<div class="vscroll d-flex flex-column align-items-center justify-content-between"><svg width="8" height="6"><use href="#up"/></svg><span class="thumb"></span><svg width="8" height="6"><use href="#dn"/></svg></div>
</div>
<footer class="status d-flex align-items-center">
<svg class="ms-2" width="18" height="10"><rect width="18" height="10" rx="2" fill="#585858"/><path d="M5 2a3 3 0 1 0 .1 0zM10 3h5M12 7h5" fill="none" stroke="#2f2f2f" stroke-width="1.500"/></svg>
<svg class="mx-2 me-3" width="12" height="12" viewBox="0 0 15 12"><path d="M5 3.500H1.500v7h10V8" fill="none" stroke="#ddd" stroke-width="1.300"/><path d="M4 8c0-4 3-5 5-5V0l5 4.500L9 9V6C7 6 5 6 4 8z" fill="#ddd"/></svg>
<div class="w67 flex-shrink-0"><select aria-label="Yakınlaştırma"><option>150%</option></select></div>
<div class="nav1 d-flex"><svg width="8" height="8"><path d="M0 0h2v8H0zM8 0v8L2 4z" fill="currentColor"/></svg>
<svg width="6" height="8"><use href="#lt"/></svg></div>
<div class="w58 flex-shrink-0"><select aria-label="Çalışma yüzeyi"><option>1</option></select></div>
<div class="nav1 d-flex"><svg width="6" height="8"><use href="#rt"/></svg>
<svg width="8" height="8"><path d="M6 0h2v8H6zM0 0v8l6-4z" fill="currentColor"/></svg></div>
<i class="vsep"></i><span class="seltext">Seçim</span>
<span class="thumb ms-auto hth"></span><svg class="me-4" width="6" height="10" color="#ddd"><use href="#rt"/></svg>
</footer>
</section>

<aside class="pcol1 d-flex flex-column">
<div class="strip justify-content-end"><svg width="9" height="6" viewBox="0 0 9 6"><path d="M0 0v6l4-3zM5 0v6l4-3z" fill="currentColor"/></svg></div>
<div class="tabs"><button class="act lead-ud"><svg width="6" height="10"><use href="#ud"/></svg>Hizala</button><button class="more" aria-label="Menü"><svg width="14" height="9"><use href="#more"/></svg></button></div>
<div class="pane align">
<div>Nesneleri Hizala:</div>
<div class="ico6">
<svg width="16" height="16"><path class="ln" d="M1.500 1v15"/><path class="f" d="M3 2h7v5H3z"/><path class="hol" d="M3.500 9.500h10v4h-10z"/></svg>
<svg width="16" height="16"><path class="ln" d="M7.500 0v16"/><path class="f" d="M4 2h7v5H4z"/><path class="hol" d="M2.500 9.500h10v4h-10z"/></svg>
<svg width="16" height="16"><path class="ln" d="M14.500 1v15"/><path class="f" d="M6 2h7v5H6z"/><path class="hol" d="M2.500 9.500h10v4h-10z"/></svg>
<svg width="16" height="16"><path class="ln" d="M0 1.500h14"/><path class="hol" d="M1.500 3.500h4v10h-4z"/><path class="f" d="M8 3h5v7H8z"/></svg>
<svg width="16" height="16"><path class="ln" d="M0 7.500h16"/><path class="hol" d="M2.500 2.500h4v10h-4z"/><path class="f" d="M9 4h5v7H9z"/></svg>
<svg width="16" height="16"><path class="ln" d="M1 15.500h14"/><path class="hol" d="M2.500 3.500h4v10h-4z"/><path class="f" d="M9 7h5v7H9z"/></svg>
</div>
<div class="rule"></div>
<div class="mt-1 pt-1">Nesneleri Dağıt:</div>
<div class="ico6">
<svg width="16" height="16"><path class="ln" d="M0 2.500h16M0 8.500h16"/><path class="f" d="M5 3h6v4H5z"/><path class="hol" d="M3.500 9.500h9v4h-9z"/></svg>
<svg width="16" height="16"><path class="ln" d="M0 4.500h16M0 11.500h16"/><path class="f" d="M5 2h6v5H5z"/><path class="hol" d="M3.500 9.500h9v4h-9z"/></svg>
<svg width="16" height="16"><path class="ln" d="M0 6.500h16M0 14.500h16"/><path class="f" d="M5 2h6v4H5z"/><path class="hol" d="M3.500 10.500h9v4h-9z"/></svg>
<svg width="16" height="16"><path class="ln" d="M2.500 0v16M9.500 0v16"/><path class="hol" d="M3.500 3.500h3v9h-3z"/><path class="f" d="M10 5h4v6h-4z"/></svg>
<svg width="16" height="16"><path class="ln" d="M4.500 0v16M11.500 0v16"/><path class="hol" d="M2.500 3.500h4v9h-4z"/><path class="f" d="M9 5h5v6H9z"/></svg>
<svg width="16" height="16"><path class="ln" d="M5.500 0v16M12.500 0v16"/><path class="f" d="M1 5h4v6H1z"/><path class="hol" d="M8.500 3.500h4v9h-4z"/></svg>
</div></div>
<div class="tabs"><button class="act">Yol Bulucu</button><button class="more" aria-label="Menü"><svg width="14" height="9"><use href="#more"/></svg></button></div>
<div class="pane pf">
<div>Şekil Modları:</div>
<div class="pf1">
<svg width="14" height="14"><path d="M1.500 1.500h8v3h3v8h-8v-3h-3z" fill="#777" stroke="#c0c0c0"/></svg>
<svg width="14" height="14"><path d="M4.500 4.500h8v8h-8z" fill="none" stroke="#707070"/><path d="M1.500 1.500h8v3h-5v5h-3z" fill="#777" stroke="#c0c0c0"/></svg>
<svg width="14" height="14"><path class="ln" d="M1.500 1.500h8v8h-8zM4.500 4.500h8v8h-8z"/><path d="M5 5h4v4H5z" fill="#888"/></svg>
<svg width="14" height="14"><path d="M1.500 1.500h8v3h3v8h-8v-3h-3z" fill="#777"/><path d="M5 5h4v4H5z" fill="#494949"/><path class="ln" d="M1.500 1.500h8v8h-8zM4.500 4.500h8v8h-8z"/></svg>
<button class="expand">Genişlet</button></div>
<div>Yol bulucular:</div>
<div class="pf2">
<svg width="15" height="15"><path d="M.500.5h6v3h-3v3h-3z" fill="#777" stroke="#c0c0c0"/><path d="M10.500 7.500h3v6h-6v-3" fill="#777" stroke="#c0c0c0"/><path class="hol" d="M4.500 4.500h5v5h-5z"/></svg>
<svg width="15" height="15"><path class="f" d="M0 0h4v4H0zM5 0h4v4H5zM0 5h8v4h2V5h4v9H5v-4H0z"/></svg>
<svg width="15" height="15"><path class="f" d="M0 0h9v9H0z"/><path class="f" d="M10 5h4v9H5v-4h5z"/></svg>
<svg width="15" height="15"><path d="M1 1h8v8H1zM5 5h9v9H5z" fill="#5f5f5f"/><path d="M5 5h5v5H5z" fill="#ddd"/></svg>
<svg width="15" height="15"><path class="ln" d="M.5.5h8v8h-8zM4.500 4.500h9v9h-9z"/><path d="M5 5h3v3H5z" fill="#222"/></svg>
<svg width="15" height="15"><path d="M1.500 1.500h8v8h-8z" fill="none" stroke="#707070"/><path d="M9.500 4.500h4v9h-9v-4h5z" fill="#777" stroke="#c6c6c6"/></svg>
</div></div>
<div class="tabs"><button class="act lead-ud"><svg width="6" height="10"><use href="#ud"/></svg>Dönüştür</button><button class="more" aria-label="Menü"><svg width="14" height="9"><use href="#more"/></svg></button></div>
<div class="pane tr">
<div class="xy">
<svg class="refp" width="20" height="20" viewBox="0 0 20 20"><path class="ln" d="M.5.5h4v4h-4zM7.500.5h4v4h-4zM14.500.5h4v4h-4zM.5 7.500h4v4h-4zM14.500 7.500h4v4h-4zM.5 14.500h4v4h-4zM7.500 14.500h4v4h-4zM14.500 14.500h4v4h-4zM5 2.500h2M12 2.500h2M5 16.500h2M12 16.500h2M2.500 5v2M2.500 12v2M16.500 5v2M16.500 12v2"/><path class="f" d="M7 7h5v5H7z"/></svg>
<label class="lab" for="x">X:</label><input id="x" value="86,548 mm"><label class="lab" for="g">G:</label><input id="g" value="19,52 mm">
<svg class="brk ms-2" width="16" height="16"><path d="M5 6V4a3 3 0 0 1 6 0v2M5 10v2a3 3 0 0 0 6 0v-2" fill="none" stroke="#ccc" stroke-width="1.800"/><path d="M0 8h3M13 8h3M1 3l2 2M15 3l-2 2M1 13l2-2M15 13l-2-2" stroke="#aaa"/></svg>
<label class="lab" for="y">Y:</label><input id="y" value="131,704 mm"><label class="lab" for="h">H:</label><input id="h" value="76,67 mm">
<span></span><label class="lab d-flex justify-content-end align-items-center" for="a1"><svg width="12" height="9"><use href="#ang"/></svg>:</label><select id="a1"><option>0°</option></select><label class="lab d-flex justify-content-end align-items-center" for="a2"><svg width="12" height="9"><path class="ln" d="M1 8.500h4l6-7H7zM4 8l5-6"/></svg>:</label><select id="a2"><option>0°</option></select><span></span>
</div>
<div class="rule my-1"></div>
<div class="props">Dikdörtgen Özellikleri:</div>
<div class="rp">
<svg class="ms-auto me-1" width="15" height="9"><use href="#wid"/></svg><input aria-label="Genişlik" value="19,52 mm"><i></i><button class="chain" aria-label="Oranı koru"><svg width="10" height="14"><use href="#chain"/></svg></button><i></i><input aria-label="Yükseklik" value="76,67 mm"><svg class="ms-1" width="16" height="15"><use href="#hei"/></svg></div>
<div class="rp rgap"><i></i><select aria-label="Açı"><option></option></select></div>
<div class="rp rows2">
<i></i><div class="spin"><span><button aria-label="Artır"><svg width="7" height="5"><use href="#up"/></svg></button><button aria-label="Azalt"><svg width="7" height="5"><use href="#dn"/></svg></button></span><input aria-label="Köşe 1" value="0 mm"></div><i></i><button class="chain both" aria-label="Köşeleri bağla"><svg width="10" height="14"><use href="#chain"/></svg></button><i></i><div class="spin"><span><button aria-label="Artır"><svg width="7" height="5"><use href="#up"/></svg></button><button aria-label="Azalt"><svg width="7" height="5"><use href="#dn"/></svg></button></span><input aria-label="Köşe 2" value="0 mm"></div><svg class="ms-2" width="16" height="15"><path d="M0 1h4M6 3h2M10 3h2M6 7h2M12 5v6" stroke="#bbb" stroke-width="2" stroke-dasharray="2 1"/><path d="M12 12h4l-2 3z" fill="#ddd"/></svg>
<i></i><div class="spin"><span><button aria-label="Artır"><svg width="7" height="5"><use href="#up"/></svg></button><button aria-label="Azalt"><svg width="7" height="5"><use href="#dn"/></svg></button></span><input aria-label="Köşe 3" value="0 mm"></div><i></i><i></i><div class="spin"><span><button aria-label="Artır"><svg width="7" height="5"><use href="#up"/></svg></button><button aria-label="Azalt"><svg width="7" height="5"><use href="#dn"/></svg></button></span><input aria-label="Köşe 4" value="0 mm"></div><svg class="ms-2" width="16" height="15"><path d="M0 12h4M6 11h2M6 7h2M12 1v10M9 11h2" stroke="#bbb" stroke-width="2" stroke-dasharray="2 1"/><path d="M12 12h4l-2 3z" fill="#ddd"/></svg>
</div>
<div class="rule mt-2"></div>
<div class="ticks">
<label class="tick"><input type="checkbox">Dikdörtgen Köşelerini Ölçekle</label>
<label class="tick"><input type="checkbox">Konturları ve Efektleri Ölçekle</label>
<label class="tick"><input type="checkbox">Piksel Izgarasına Hizala</label></div>
</div>
</aside>

<aside class="pcol2 d-flex flex-column">
<div class="strip justify-content-end"><svg width="9" height="6" viewBox="0 0 9 6"><path d="M0 0v6l4-3zM5 0v6l4-3z" fill="currentColor"/></svg></div>
<div class="tabs"><button class="act lead-ud"><svg width="6" height="10"><use href="#ud"/></svg>Renk</button><button>Renk Kılavuzu</button><button class="more" aria-label="Menü"><svg width="14" height="9"><use href="#more"/></svg></button></div>
<div class="pane colorpane">
<svg width="41" height="15"><path d="M0 0h41v15H0z" fill="#222"/><use href="#none" x="1" y="1" width="13" height="13"/><path d="M14 1h13v13H14z" fill="#000"/><path d="M27 1h13v13H27z" fill="#fff"/></svg>
<div class="d-flex justify-content-between specrow"><div class="spectrum"></div><i class="corner-grip align-self-end"></i></div></div>
<div class="tabs"><button class="act">Renk Örnekleri</button><button class="more" aria-label="Menü"><svg width="14" height="9"><use href="#more"/></svg></button></div>
<div class="pane swpane">
<div class="d-flex justify-content-between"><svg width="31" height="31"><use href="#fs"/></svg><div class="view d-flex"><button aria-label="Liste"><svg width="13" height="14"><path d="M0 1.500h13M0 5h13M0 8.500h13M0 12h13" stroke="#ccc" stroke-width="2"/></svg></button><button aria-label="Küçük resim"><svg width="14" height="14"><path class="f" d="M0 0h4v4H0zM5 0h4v4H5zM10 0h4v4h-4zM0 5h4v4H0zM5 5h4v4H5zM10 5h4v4h-4zM0 10h4v4H0zM5 10h4v4H5zM10 10h4v4h-4z"/></svg></button></div></div>
<div class="d-flex swwrap"><div class="swgrid" id="swatches"></div>
<div class="sbar d-flex flex-column align-items-center justify-content-between"><svg width="8" height="6"><use href="#up"/></svg><svg width="11" height="11"><path d="M0 0h11v11H0z" fill="#8c8c8c"/></svg><svg width="8" height="6"><use href="#dn"/></svg></div></div>
<div class="foot d-flex align-items-center swfoot">
<svg width="18" height="12"><path d="M1.500 1v10M4.500 1v10M7 1l4 10" stroke="#c6c6c6" stroke-width="1.600"/><path d="M12 8h5l-2.500 3z" fill="#c6c6c6"/></svg>
<svg width="12" height="12"><path d="M10 2L3 6l7 4" fill="none" stroke="#c6c6c6" stroke-width="1.500"/><circle class="f" cx="3" cy="6" r="2.200"/><circle class="f" cx="9" cy="2" r="1.500"/><circle class="f" cx="9" cy="10" r="1.500"/></svg>
<svg width="17" height="12"><path class="ln" d="M6 10.500H.5v-9h5l1 1h7V5"/><circle class="ln" cx="8" cy="7.500" r="3"/><circle class="ln" cx="12.500" cy="7.500" r="3"/></svg>
<svg width="17" height="12"><path class="f" d="M0 0h3v3H0zM4 0h3v3H4zM8 0h3v3H8zM0 4h3v3H0zM4 4h3v3H4zM8 4h3v3H8zM0 8h3v3H0zM4 8h3v3H4zM12 9h5l-2.500 3z"/></svg>
<svg width="12" height="12"><path class="ln" d="M.5.5h10v10H.5zM2 3.500h1M4 3.500h5M2 5.500h1M4 5.500h5M2 7.500h1M4 7.500h5"/></svg>
<svg width="13" height="11"><path class="f" d="M0 1h5l1 2h7v8H0z"/></svg>
<svg width="12" height="11"><use href="#page"/></svg>
<svg width="12" height="13"><use href="#trash"/></svg>
<i class="corner-grip ms-auto align-self-end"></i></div></div>
<div class="tabs"><button>Kontur</button><button class="act lead-ud"><svg width="6" height="10"><use href="#ud"/></svg>Degrade</button><button>Saydamlık</button><button class="more" aria-label="Menü"><svg width="14" height="9"><use href="#more"/></svg></button></div>
<div class="pane gpane">
<div class="d-flex">
<div class="gleft"><div class="d-flex align-items-center gap-1"><span class="gprev"></span><svg width="6" height="4"><use href="#dn"/></svg></div><svg class="mt-1" width="31" height="31"><use href="#fs"/></svg><svg class="mt-2 ms-2" width="16" height="15"><path d="M1.500.5h7v5h-7zM6.500 8.500h7v5h-7z" fill="#5e5e5e" stroke="#777"/><path d="M11 1h4l-2 3zM0 12h4l-2-3z" fill="#777"/></svg></div>
<div class="gform">
<label class="lab" for="tur">Tür:</label><select id="tur" class="wide"><option></option></select>
<span class="lab dim">Kontur:</span><div class="strk d-flex"><button aria-label="İçinde"><svg width="16" height="14"><path d="M2.500 14V2.500H16M6.500 14V6.500H16" fill="none" stroke="#777"/></svg></button><button aria-label="Boyunca"><svg width="16" height="14"><path d="M2 2l4 4M6.500 14V6.500H16M3 3h13" fill="none" stroke="#777"/></svg></button><button aria-label="Karşıdan"><svg width="16" height="14"><path d="M2.500 14V2.500H16M6.500 14V6.500H16" fill="none" stroke="#777"/></svg></button></div>
<label class="lab dim" for="ga" aria-label="Açı"><svg class="ms-auto" width="12" height="9"><use href="#ang"/></svg></label><select id="ga" class="w69" disabled><option></option></select>
<label class="lab dim" for="gr" aria-label="En boy oranı"><svg class="ms-auto" width="15" height="14"><path d="M2.500 1v10M1 3l1.500-2L4 3M1 9l1.500 2L4 9M5 13.500h9" fill="none" stroke="#808080"/><ellipse cx="9.500" cy="6" rx="4.500" ry="4" fill="none" stroke="#808080"/></svg></label><select id="gr" class="w69" disabled><option></option></select>
</div></div>
<div class="d-flex align-items-center rampr"><div class="ramp"></div><svg class="ms-2 ps-1" color="#707070" width="16" height="13"><use href="#trash"/></svg></div>
<div class="gform second"><label class="lab dim" for="op2">Opaklık:</label><select id="op2" class="w69" disabled><option></option></select>
<label class="lab dim" for="ko">Konum:</label><div class="d-flex"><select id="ko" class="w69" disabled><option></option></select><i class="corner-grip ms-auto align-self-end"></i></div></div>
</div>
<div class="tabs"><button class="act">Kitaplıklar</button><button>Görünüm</button><button>Grafik Stilleri</button></div>
<div class="gapline"></div>
<div class="tabs"><button class="act">Katmanlar</button><button>Çalışma Yüzeyleri</button><button class="more" aria-label="Menü"><svg width="14" height="9"><use href="#more"/></svg></button></div>
<div class="d-flex flex-column flex-fill lpane">
<div class="layers flex-fill">
<div class="lrow d-flex"><button class="lcell" aria-label="Görünürlük"><svg width="12" height="8"><path d="M.5 4.500C3 0 9 0 11.500 4.500 9 8 3 8 .5 4.500z" fill="none" stroke="#ccc"/><circle cx="6" cy="4" r="2" fill="#ccc"/></svg></button><button class="lcell" aria-label="Kilit"></button><span><svg width="5" height="18"><path d="M0 0h4v18H0z" fill="#5b84e8"/></svg></span><button class="px-2" aria-label="Genişlet"><svg width="6" height="9"><use href="#rt"/></svg></button><span><svg width="18" height="18"><path d="M.5.5h17v17H.5z" fill="#fff" stroke="#111"/><path d="M7 1h4v16H7z" fill="#e81b73"/></svg></span><span class="ms-1">katman 1</span>
<button class="ms-auto px-1 target" aria-label="Hedef"><svg width="10" height="10"><circle cx="5" cy="5" r="4" fill="none" stroke="#aaa" stroke-width="1.200"/></svg></button><span><svg width="16" height="20"><path d="M2.500 6.500h7v7h-7z" fill="#4d7df0" stroke="#111"/><path d="M11 0h5v5z" fill="#ccc"/></svg></span></div>
</div>
<div class="lfoot d-flex align-items-center foot"><span class="me-auto">1 Katman</span><svg width="14" height="14"><use href="#lens"/></svg><svg width="12" height="12"><path class="ln" d="M.5.5h7v7h-7z"/><path d="M4.500 3.500h6v7h-6z" fill="#999" stroke="#c6c6c6"/></svg><svg width="15" height="11"><path class="ln" d="M0 2.500h4M.5 0v2.500"/><path class="f" d="M4 0l3 2.500L4 5zM8 0h6v11h-3V5H8zM8 7h2v4z"/></svg><svg width="12" height="11"><use href="#page"/></svg><svg color="#6c6c6c" width="12" height="13"><use href="#trash"/></svg></div>
</div>
</aside>
</main>

<div class="dropdown-menu cmenu m1 show">
<button class="dropdown-item">Renk Örneği Uygulamayı Geri Al</button><button class="dropdown-item">Yamultmayı Yinele</button><hr class="dropdown-divider">
<button class="dropdown-item off" disabled>Perspektif<svg width="5" height="8"><use href="#chev"/></svg></button><hr class="dropdown-divider">
<button class="dropdown-item">Seçilen Yolu Ayır</button><button class="dropdown-item">Grupla</button><button class="dropdown-item">Birleştir</button><button class="dropdown-item">Ortalama Değer...</button><hr class="dropdown-divider">
<button class="dropdown-item">Kırpma Maskesi Oluştur</button><button class="dropdown-item">Bileşik Yol Oluştur</button><button class="dropdown-item">Kılavuz Oluştur</button><hr class="dropdown-divider">
<button class="dropdown-item hot">Dönüştür<svg width="5" height="8"><use href="#chev"/></svg></button><button class="dropdown-item">Düzenle<svg width="5" height="8"><use href="#chev"/></svg></button><button class="dropdown-item">Seç<svg width="5" height="8"><use href="#chev"/></svg></button>
</div>
<div class="dropdown-menu cmenu m2 show">
<button class="dropdown-item">Tekrar Dönüştür<span>Ctrl+D</span></button><hr class="dropdown-divider">
<button class="dropdown-item">Taşı...<span>Shift+Ctrl+M</span></button><button class="dropdown-item">Döndür...</button><button class="dropdown-item">Yansıt...</button><button class="dropdown-item">Ölçek...</button><button class="dropdown-item hot">Yamult...</button><hr class="dropdown-divider">
<button class="dropdown-item">Her Birini Dönüştür...<span>Alt+Shift+Ctrl+D</span></button><hr class="dropdown-divider">
<button class="dropdown-item">Sınırlayıcı Kutuyu Sıfırla</button>
</div>
<svg class="ptr" width="14" height="20"><path d="M1.500 1v15l3.500-3.500 2.500 6 2.500-1-2.500-5.500h5z" fill="#fff" stroke="#111"/></svg>

<script>
const colors = ['','reg','#fff','#000','#e30613','#ffed00','#009640','#009fe3','#312783','#e6007e','#be1622','#e6332a','#e94e1b','#f39200','#f9b233',
'#fcea10','#dedc00','#95c11f','#3aaa35','#008d36','#006633','#2fac66','#13a19a','#36a9e1','#1d71b8','#2d2e83','#29235c','#662483','#951b81','#a3195b',
'#d60b52','#e81b73','#cbbba0','#a48a7b','#7b6a58','#634e42','#ca9e67','#b17f4a','#936037','#7d4e24','#683c11','#432918','linear-gradient(90deg,#fff,#222)','linear-gradient(90deg,#ffe600,#f3802b)','linear-gradient(90deg,#3a7cc0,#c8dcf0)',
'radial-gradient(circle at 50% 60%,#ddd 4px,#111 5px)','repeating-conic-gradient(#8bc34a 0 10%,#eef5d5 0 20%)','repeating-conic-gradient(#a9624a 0 8%,#f0ddd0 0 16%)'];
const box = document.getElementById('swatches');
colors.forEach((c, n) => {
  const b = document.createElement('button');
  b.setAttribute('aria-label', 'Örnek ' + (n + 1));
  if (n === 0) b.innerHTML = '<svg width="13" height="13"><use href="#none"/></svg>';
  else if (c === 'reg') b.innerHTML = '<svg width="13" height="13" viewBox="0 0 13 13"><path d="M0 0h13v13H0z" fill="#fff"/><path d="M6.500 0v13M0 6.500h13" stroke="#111"/><circle cx="6.500" cy="6.500" r="4.500" fill="none" stroke="#111"/><circle cx="6.500" cy="6.500" r="2" fill="none" stroke="#111"/></svg>';
  else b.style.background = c;
  if (n === 31) b.className = 'picked';
  box.append(b);
});
</script>
<script src="https://cdn.jsdelivr.net/npm/bootstrap@5.3.0/dist/js/bootstrap.bundle.min.js"></script>
</body>
</html>
